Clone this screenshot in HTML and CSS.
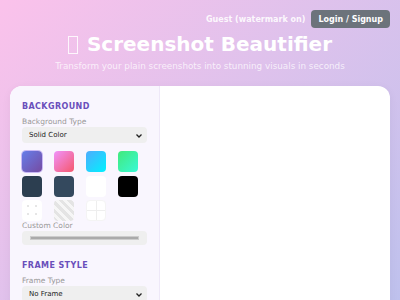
FILE: index.html
```html
<!DOCTYPE html>
<html>

<head>
    <title>Screenshot Beautifier</title>
    <link rel="stylesheet" href="styles.css">
</head>

<body>
    <div class="topbar">
        <span class="user-status">Guest (watermark on)</span>
        <button class="login-button">Login / Signup</button>
    </div>

    <div class="hero">
        <h1><span class="missing-glyph"></span> Screenshot Beautifier</h1>
        <p>Transform your plain screenshots into stunning visuals in seconds</p>
    </div>

    <div class="app">
        <div class="sidebar">
            <!-- 背景设置 -->
            <div class="section">
                <h3>Background</h3>
                <label>Background Type</label>
                <div class="select-wrap">
                    <select class="control">
                        <option>Solid Color</option>
                    </select>
                    <svg class="chevron" width="6" height="4" viewBox="0 0 6 4"><path d="M0.5 0.5 L3 3 L5.5 0.5" fill="none" stroke="#222" stroke-width="1.3"/></svg>
                </div>
                <div class="swatches">
                    <div class="swatch active" style="background: linear-gradient(135deg, #667eea, #764ba2);"></div>
                    <div class="swatch" style="background: linear-gradient(135deg, #f093fb, #f5576c);"></div>
                    <div class="swatch" style="background: linear-gradient(135deg, #4facfe, #00f2fe);"></div>
                    <div class="swatch" style="background: linear-gradient(135deg, #43e97b, #38f9d7);"></div>
                    <div class="swatch" style="background: #2c3e50;"></div>
                    <div class="swatch" style="background: #34495e;"></div>
                    <div class="swatch" style="background: #ffffff;"></div>
                    <div class="swatch" style="background: #000000;"></div>
                    <div class="swatch dots"></div>
                    <div class="swatch stripes"></div>
                    <div class="swatch grid"></div>
                </div>
                <label>Custom Color</label>
                <div class="color-input"><div class="color-bar"></div></div>
            </div>

            <!-- 边框设置 -->
            <div class="section">
                <h3>Frame Style</h3>
                <label>Frame Type</label>
                <div class="select-wrap">
                    <select class="control">
                        <option>No Frame</option>
                    </select>
                    <svg class="chevron" width="6" height="4" viewBox="0 0 6 4"><path d="M0.5 0.5 L3 3 L5.5 0.5" fill="none" stroke="#222" stroke-width="1.3"/></svg>
                </div>
            </div>
        </div>
        <div class="preview"></div>
    </div>
</body>

</html>
```

FILE: styles.css
```css
html {
    min-height: 100%;
    background: linear-gradient(135deg, #fbc2eb 0%, #a6c1ee 100%);
}

body {
    font-family: "DejaVu Sans", sans-serif;
    margin: 0;
    padding: 10px;
    min-height: 560px;
}

/* 顶部栏 */
.topbar {
    display: flex;
    justify-content: flex-end;
    align-items: center;
    gap: 6px;
}

.user-status {
    font-size: 8px;
    font-weight: bold;
    color: rgba(255, 255, 255, 0.9);
}

.login-button {
    font-family: inherit;
    font-size: 8px;
    font-weight: bold;
    color: #ffffff;
    background-color: #6c737b;
    border: none;
    border-radius: 4px;
    padding: 0 7px;
    height: 18px;
}

/* 标题 */
.hero {
    text-align: center;
    color: #ffffff;
}

.hero h1 {
    margin: 2px 0 0;
    font-size: 20px;
    line-height: 28px;
}

.missing-glyph {
    display: inline-block;
    width: 8px;
    height: 16px;
    border: 1px solid rgba(255, 255, 255, 0.85);
    vertical-align: -3px;
    margin-right: 2px;
}

.hero p {
    margin: 3px 0 0;
    font-size: 8.8px;
    color: rgba(255, 255, 255, 0.75);
}

/* 主体 */
.app {
    display: flex;
    margin-top: 15px;
    background-color: #ffffff;
    border-radius: 12px;
    box-shadow: 0px 2px 10px rgba(0, 0, 0, 0.05);
    overflow: hidden;
    min-height: 400px;
}

.sidebar {
    width: 125px;
    padding: 16px 12px 12px;
    background-color: #f9f6fe;
    border-right: 1px solid #eee8f8;
}

.preview {
    flex: 1;
}

.section {
    margin-bottom: 16px;
}

.section h3 {
    margin: 0 0 6px;
    font-size: 8px;
    letter-spacing: 0.4px;
    text-transform: uppercase;
    color: #6a4fbb;
}

.section label {
    display: block;
    font-size: 7.5px;
    color: #999999;
    margin-bottom: 1px;
}

.select-wrap {
    position: relative;
    margin-bottom: 8px;
}

.control {
    display: block;
    width: 125px;
    height: 16px;
    font-family: inherit;
    font-size: 7px;
    color: #222222;
    background-color: #efefef;
    border: none;
    border-radius: 4px;
    padding: 0 7px;
    appearance: none;
    -webkit-appearance: none;
}

.chevron {
    position: absolute;
    right: 5px;
    top: 7px;
}

.swatches {
    display: grid;
    grid-template-columns: repeat(4, 21px);
    column-gap: 11px;
    row-gap: 3.5px;
    margin-bottom: 0;
}

.swatch {
    width: 20px;
    height: 21px;
    border-radius: 4px;
    box-sizing: border-box;
}

.swatch.active {
    box-shadow: 0 0 0 1px #c9b8f5;
}

.swatch.dots {
    background-color: #ffffff;
    background-image: radial-gradient(#c8c8c8 0.6px, transparent 0.8px);
    background-size: 8px 8px;
    background-position: 2px 2px;
}

.swatch.stripes {
    background: repeating-linear-gradient(45deg, #e4e4e4 0 3px, #f6f6f6 3px 6px);
}

.swatch.grid {
    background-color: #ffffff;
    background-image: linear-gradient(#eeeeee, #eeeeee), linear-gradient(#eeeeee, #eeeeee);
    background-size: 1px 100%, 100% 1px;
    background-position: center, center;
    background-repeat: no-repeat;
    border: 1px solid #f4f4f4;
}

.color-input {
    height: 14px;
    background-color: #efefef;
    border-radius: 4px;
    padding: 0 8px;
    display: flex;
    align-items: center;
}

.color-bar {
    flex: 1;
    height: 2px;
    background-color: #aaaaaa;
    border: 0.5px solid #cccccc;
}
```
